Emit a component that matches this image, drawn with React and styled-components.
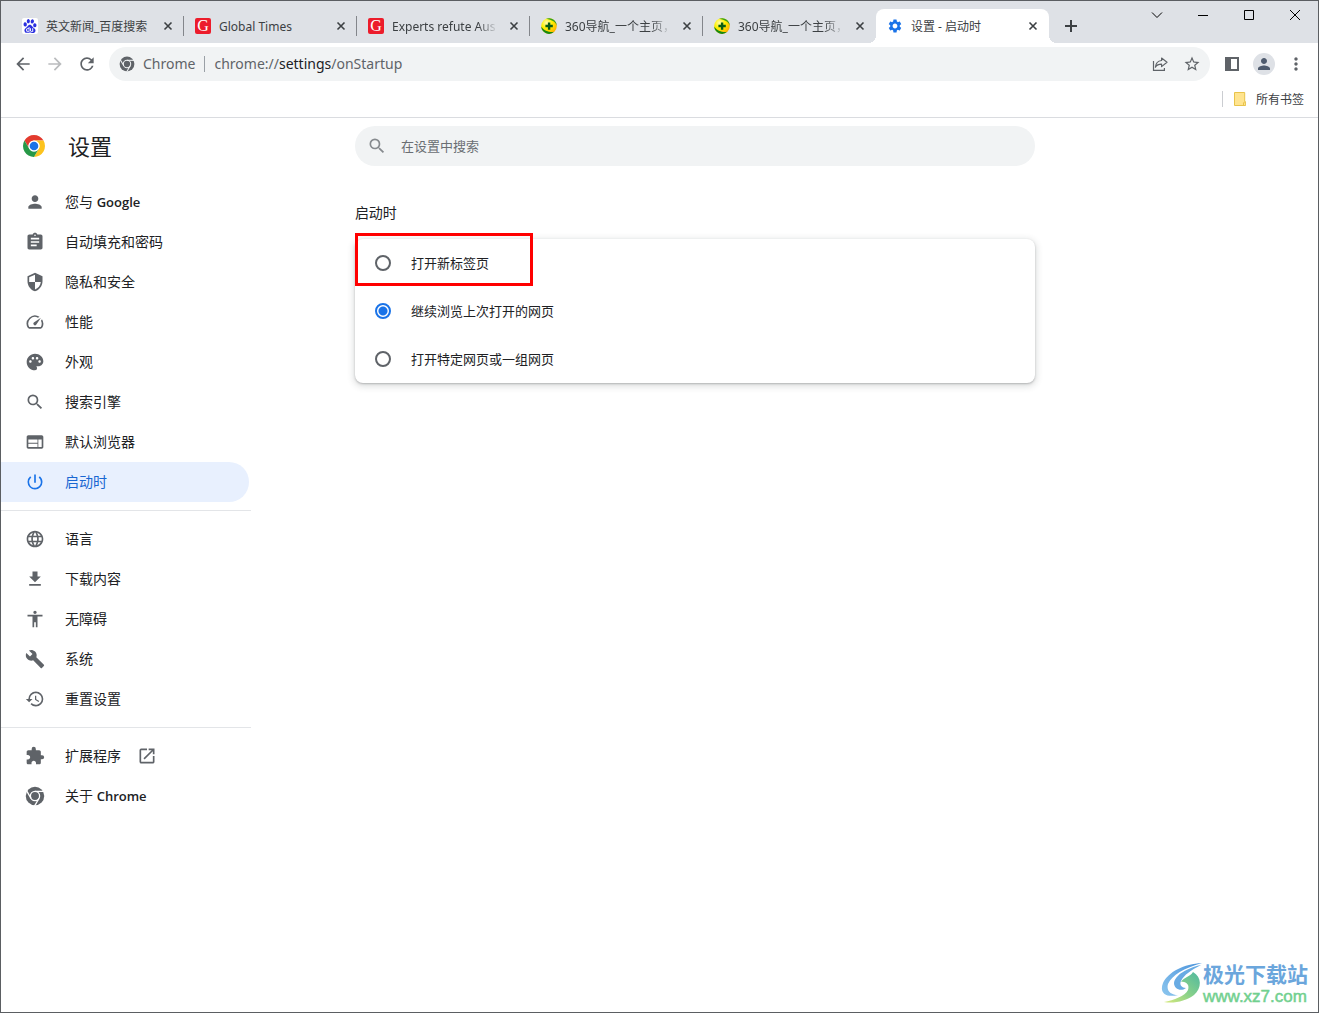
import React, {useState} from 'react'
import styled, {createGlobalStyle} from 'styled-components'
import {
  MdAccessibility,
  MdArrowBack,
  MdArrowForward,
  MdAssignment,
  MdBuild,
  MdExtension,
  MdFileDownload,
  MdHistory,
  MdLanguage,
  MdMoreVert,
  MdOpenInNew,
  MdOutlineSpeed,
  MdPalette,
  MdPerson,
  MdPowerSettingsNew,
  MdRefresh,
  MdSearch,
  MdSecurity,
  MdSettings,
  MdStarBorder,
  MdWeb,
} from 'react-icons/md'
import {SiBaidu} from 'react-icons/si'

const SECTOR = 'M12 6H22.39A12 12 0 0 0 1.61 6L6.8 15A6 6 0 0 1 12 6Z'

const ChromeLogo = ({size = 22}) => (
  <svg width={size} height={size} viewBox="0 0 24 24" aria-hidden="true">
    <path d={SECTOR} fill="#e33b2e" />
    <path d={SECTOR} fill="#fcc31e" transform="rotate(120 12 12)" />
    <path d={SECTOR} fill="#279847" transform="rotate(240 12 12)" />
    <circle cx="12" cy="12" r="6" fill="#fff" />
    <circle cx="12" cy="12" r="4.7" fill="#1a73e8" />
  </svg>
)

const ChromeMono = ({size = 20, gap = '#fff'}) => (
  <svg width={size} height={size} viewBox="-1 -1 26 26" aria-hidden="true">
    <circle cx="12" cy="12" r="12" fill="#5f6368" />
    <g stroke={gap} strokeWidth="1.7" fill="none">
      <circle cx="12" cy="12" r="6" />
      <path d="M12 6H24" />
      <path d="M12 6H24" transform="rotate(120 12 12)" />
      <path d="M12 6H24" transform="rotate(240 12 12)" />
    </g>
  </svg>
)

const Nav360Logo = () => (
  <svg width="16" height="16" viewBox="0 0 16 16" aria-hidden="true">
    <defs>
      <radialGradient id="ball" cx="0.35" cy="0.3" r="0.75">
        <stop offset="0" stopColor="#fffbb0" />
        <stop offset="0.45" stopColor="#fff200" />
        <stop offset="1" stopColor="#ffae00" />
      </radialGradient>
    </defs>
    <circle cx="8" cy="8" r="7.8" fill="url(#ball)" />
    <path d="M5 .8A7.8 7.8 0 0 1 15.8 8C15.3 4.5 11 1.6 5 .8Z" fill="#35a01c" />
    <path d="M.2 8.5A7.8 7.8 0 0 0 13.2 13.8C9 14.6 3 13 .2 8.5Z" fill="#178a10" />
    <path d="M6.9 4.4h2.4v2.4h2.5v2.4H9.3v2.5H6.9V9.2H4.4V6.8h2.5z" fill="#0b5d13" />
  </svg>
)

const CloseGlyph = () => (
  <svg width="16" height="16" viewBox="0 0 16 16" fill="none" stroke="#3c4043" strokeWidth="1.6" aria-hidden="true">
    <path d="M4.5 4.5l7 7M11.5 4.5l-7 7" />
  </svg>
)

const PlusGlyph = () => (
  <svg width="16" height="16" viewBox="0 0 16 16" fill="none" stroke="#3c4043" strokeWidth="2" aria-hidden="true">
    <path d="M8 2v12M2 8h12" />
  </svg>
)

const ShareGlyph = () => (
  <svg width="16" height="16" viewBox="0 0 16 16" fill="none" stroke="#5f6368" strokeWidth="1.2" aria-hidden="true">
    <path d="M1.5 5V14.4H12.4V12" />
    <path d="M9.6 2L15 6.3L9.6 10.6V8.2C6.6 8.2 4.7 9 3.4 11.2C3.7 7.4 5.8 4.9 9.6 4.5Z" strokeLinejoin="round" />
  </svg>
)

const SidePanelGlyph = () => (
  <svg width="14" height="14" viewBox="0 0 14 14" aria-hidden="true">
    <path d="M0 0h14v14H0zM6 2v10h6V2z" fill="#5f6368" fillRule="evenodd" />
  </svg>
)

const FolderGlyph = () => (
  <svg width="12" height="14" viewBox="0 0 12 14" aria-hidden="true">
    <path d="M.5.5h10.2v9.2h.9v3.8H.5z" fill="#ffe48f" stroke="#e8c34a" />
    <path d="M9.5 13.5v-2.8h1.2" fill="none" stroke="#e8c34a" />
  </svg>
)

const Swirl = () => (
  <svg width="42" height="42" viewBox="-1 -1 42 42" aria-hidden="true">
    <defs>
      <linearGradient id="swirlBlue" x1="1" y1="0" x2="0" y2="1">
        <stop offset="0" stopColor="#4c94dc" />
        <stop offset="1" stopColor="#8cc6ee" />
      </linearGradient>
      <linearGradient id="swirlGreen" x1="1" y1="0" x2="0" y2="1">
        <stop offset="0" stopColor="#4fb8a0" />
        <stop offset="0.5" stopColor="#86d08a" />
        <stop offset="1" stopColor="#d8ea7c" />
      </linearGradient>
    </defs>
    <path d="M40 0C22 1 6 9 1 20C-3 30 4 35 16 32C9 32 4 28 6 21C10 12 22 5 40 0Z" fill="url(#swirlBlue)" />
    <path d="M39 2C25 5 13 12 12 20C12 26 19 29 24 25C20 25 17 22 19 18C22 12 29 7 39 2Z" fill="#68abe3" />
    <path d="M31 9C40 14 40 25 32 32C24 38 12 41 2 39C12 37 23 33 26 27C28 22 24 18 19 19C22 14 28 14 31 9Z" fill="url(#swirlGreen)" />
  </svg>
)

const TABS = [
  {id: 1, title: '英文新闻_百度搜索', icon: 'baidu'},
  {id: 2, title: 'Global Times', icon: 'gt'},
  {id: 3, title: 'Experts refute Aus', icon: 'gt', fade: true},
  {id: 4, title: '360导航_一个主页，', icon: 'nav', fade: true},
  {id: 5, title: '360导航_一个主页，', icon: 'nav', fade: true},
  {id: 6, title: '设置 - 启动时', icon: 'settings', active: true},
]

const MENU = [
  [
    {label: '您与 ', brand: 'Google', Icon: MdPerson},
    {label: '自动填充和密码', Icon: MdAssignment},
    {label: '隐私和安全', Icon: MdSecurity},
    {label: '性能', Icon: MdOutlineSpeed},
    {label: '外观', Icon: MdPalette},
    {label: '搜索引擎', Icon: MdSearch},
    {label: '默认浏览器', Icon: MdWeb},
    {label: '启动时', Icon: MdPowerSettingsNew, selected: true},
  ],
  [
    {label: '语言', Icon: MdLanguage},
    {label: '下载内容', Icon: MdFileDownload},
    {label: '无障碍', Icon: MdAccessibility},
    {label: '系统', Icon: MdBuild},
    {label: '重置设置', Icon: MdHistory},
  ],
  [
    {label: '扩展程序', Icon: MdExtension, external: true},
    {label: '关于 ', brand: 'Chrome', Icon: ChromeMono},
  ],
]

const OPTIONS = ['打开新标签页', '继续浏览上次打开的网页', '打开特定网页或一组网页']

const getFavicon = (icon) => {
  switch (icon) {
    case 'baidu':
      return <PawIcon><SiBaidu size={14} /></PawIcon>
    case 'gt':
      return <LetterIcon>G</LetterIcon>
    case 'nav':
      return <Nav360Logo />
    default:
      return <MdSettings size={16} color="#1a73e8" />
  }
}

const App = () => {
  const [choice, setChoice] = useState(1)

  return (
    <>
      <GlobalStyle />
      <Window>
        <TabStrip>
          {TABS.map((tab) => (
            <Tab key={tab.id} $active={tab.active}>
              <TabButton>
                {getFavicon(tab.icon)}
                <TabTitle $fade={tab.fade}>{tab.title}</TabTitle>
              </TabButton>
              <CloseButton aria-label="关闭"><CloseGlyph /></CloseButton>
            </Tab>
          ))}
          <NewTab aria-label="新标签页"><PlusGlyph /></NewTab>
          <Controls>
            <ControlButton aria-label="搜索标签页">
              <svg width="12" height="12" viewBox="0 0 12 12"><path d="M1 3.500l5 5 5-5" /></svg>
            </ControlButton>
            <ControlButton aria-label="最小化">
              <svg width="12" height="12" viewBox="0 0 12 12"><path d="M1 6.500h10" /></svg>
            </ControlButton>
            <ControlButton aria-label="最大化">
              <svg width="12" height="12" viewBox="0 0 12 12"><path d="M1.500 1.500h9v9h-9z" /></svg>
            </ControlButton>
            <ControlButton aria-label="关闭窗口">
              <svg width="12" height="12" viewBox="0 0 12 12"><path d="M1 1l10 10M11 1L1 11" /></svg>
            </ControlButton>
          </Controls>
        </TabStrip>

        <Toolbar>
          <ToolButton aria-label="后退"><MdArrowBack size={20} /></ToolButton>
          <ToolButton aria-label="前进" disabled><MdArrowForward size={20} /></ToolButton>
          <ToolButton aria-label="重新加载"><MdRefresh size={20} /></ToolButton>
          <Omnibox>
            <ChromeMono size={16} gap="#f1f3f4" />
            <Origin>Chrome</Origin>
            <Address>chrome://<b>settings</b>/onStartup</Address>
            <ToolButton aria-label="分享"><ShareGlyph /></ToolButton>
            <ToolButton aria-label="加入书签"><MdStarBorder size={18} /></ToolButton>
          </Omnibox>
          <ToolButton aria-label="侧边栏"><SidePanelGlyph /></ToolButton>
          <ToolButton aria-label="用户"><Avatar><MdPerson size={18} /></Avatar></ToolButton>
          <ToolButton aria-label="更多"><MdMoreVert size={20} /></ToolButton>
        </Toolbar>

        <BookmarkBar>
          <BookmarkButton><FolderGlyph />所有书签</BookmarkButton>
        </BookmarkBar>

        <Page>
          <Sidebar>
            <Brand>
              <ChromeLogo />
              <h1>设置</h1>
            </Brand>
            <nav>
              {MENU.map((group, i) => (
                <MenuGroup key={i}>
                  {group.map(({label, brand, Icon, selected, external}) => (
                    <MenuItem key={label} href="#" $selected={selected}>
                      <Icon size={20} />
                      <Label>{label}{brand && <b>{brand}</b>}</Label>
                      {external && <MdOpenInNew size={20} />}
                    </MenuItem>
                  ))}
                </MenuGroup>
              ))}
            </nav>
          </Sidebar>
          <Main>
            <SearchBox>
              <MdSearch size={20} />
              <input type="search" aria-label="在设置中搜索" placeholder="在设置中搜索" />
            </SearchBox>
            <SectionTitle>启动时</SectionTitle>
            <Card>
              {OPTIONS.map((option, i) => (
                <Option key={option}>
                  <input
                    type="radio"
                    name="startup"
                    checked={choice === i}
                    onChange={() => setChoice(i)}
                  />
                  <Label>{option}</Label>
                </Option>
              ))}
              <Highlight />
            </Card>
          </Main>
        </Page>

        <SiteMark>
          <Swirl />
          <div>
            <SiteName>极光下载站</SiteName>
            <SiteUrl>www.xz7.com</SiteUrl>
          </div>
        </SiteMark>
      </Window>
    </>
  )
}

const GlobalStyle = createGlobalStyle`
  * {
    box-sizing: border-box;
  }
  body {
    margin: 0;
    background: #fff;
    color: #202124;
    font-family: "Noto Sans", "Noto Sans CJK SC", sans-serif;
    font-size: 14px;
  }
  button, input {
    font: inherit;
    color: inherit;
    border: 0;
    padding: 0;
    margin: 0;
    background: none;
  }
  svg {
    flex-shrink: 0;
  }
`

const Window = styled.div`
  position: relative;
  min-height: 100vh;
  border: 1px solid #5b5e62;
`

const TabStrip = styled.div`
  display: flex;
  align-items: flex-end;
  height: 42px;
  padding-left: 10px;
  background: #dee1e6;
`

const Tab = styled.div`
  position: relative;
  display: flex;
  align-items: center;
  flex: 0 1 173px;
  min-width: 0;
  height: 34px;
  padding: 0 8px 0 11px;
  border-radius: 8px 8px 0 0;
  background: ${({$active}) => ($active ? '#fff' : 'none')};

  /* divider between two resting tabs */
  &:not(:nth-child(5)):not(:nth-child(6))::after {
    content: '';
    position: absolute;
    right: 0;
    top: 7px;
    width: 1px;
    height: 20px;
    background: #83868b;
  }

  ${({$active}) => $active && `
    &::before, &&&&::after {
      content: '';
      position: absolute;
      bottom: 0;
      width: 8px;
      height: 8px;
    }
    &::before {
      left: -8px;
      background: radial-gradient(circle at 0 0, transparent 8px, #fff 8px);
    }
    &&&&::after {
      right: -8px;
      background: radial-gradient(circle at 100% 0, transparent 8px, #fff 8px);
    }
  `}
`

const TabButton = styled.button`
  display: flex;
  align-items: center;
  gap: 8px;
  flex: 1;
  min-width: 0;
  height: 100%;
`

const TabTitle = styled.span`
  flex: 1;
  overflow: hidden;
  margin-right: 4px;
  padding-top: 2px;
  color: #3c4043;
  font-size: 12px;
  line-height: 18px;
  text-align: left;
  white-space: nowrap;
  mask-image: ${({$fade}) => ($fade ? 'linear-gradient(to left, transparent 4px, #000 24px)' : 'none')};
`

const CloseButton = styled.button`
  display: flex;
  width: 16px;
  height: 16px;
`

const PawIcon = styled.span`
  display: grid;
  place-items: center;
  width: 16px;
  height: 16px;
  border-radius: 2px;
  background: #fff;
  color: #2a2fe0;
`

const LetterIcon = styled.span`
  width: 16px;
  height: 16px;
  border-radius: 2px;
  background: #ec1c2b;
  color: #fff;
  font: 16px/16px "Liberation Serif", serif;
  text-align: center;
`

const NewTab = styled.button`
  display: grid;
  place-items: center;
  width: 28px;
  height: 34px;
  margin-left: 8px;
`

const Controls = styled.div`
  display: flex;
  align-self: flex-start;
  margin-left: auto;
`

const ControlButton = styled.button`
  display: grid;
  place-items: center;
  width: 46px;
  height: 28px;

  svg {
    fill: none;
    stroke: #000;
  }
`

const Toolbar = styled.div`
  display: flex;
  align-items: center;
  height: 42px;
  padding: 0 6px;
  color: #5f6368;
`

const ToolButton = styled.button`
  display: grid;
  place-items: center;
  flex-shrink: 0;
  width: 32px;
  height: 32px;

  &:disabled {
    color: #babcbe;
  }
`

const Omnibox = styled.div`
  display: flex;
  align-items: center;
  flex: 1;
  min-width: 0;
  height: 34px;
  margin: 0 6px;
  padding: 0 2px 0 10px;
  border-radius: 17px;
  background: #f1f3f4;
  font-size: 14px;
  line-height: 20px;
`

const Origin = styled.span`
  margin: 0 9px 0 8px;
`

const Address = styled.span`
  flex: 1;
  display: flex;
  align-items: center;
  overflow: hidden;
  white-space: nowrap;

  b {
    color: #202124;
    font-weight: 400;
  }
  &::before {
    content: '';
    width: 1px;
    height: 16px;
    margin-right: 9px;
    background: #9aa0a6;
  }
`

const Avatar = styled.span`
  display: grid;
  place-items: center;
  width: 22px;
  height: 22px;
  border-radius: 50%;
  background: #dee1e6;
  color: #4f5b6e;
`

const BookmarkBar = styled.div`
  display: flex;
  align-items: center;
  justify-content: flex-end;
  height: 33px;
  padding: 0 14px 4px 0;
  border-bottom: 1px solid #dadce0;
`

const BookmarkButton = styled.button`
  display: flex;
  align-items: center;
  gap: 10px;
  height: 16px;
  padding-left: 11px;
  border-left: 1px solid #cbcdd1;
  color: #3c4043;
  font-size: 12px;
`

const Page = styled.div`
  display: grid;
  grid-template-columns: minmax(250px, 5fr) minmax(0, 680px) 4fr;
`

const Sidebar = styled.aside`
  width: 250px;
`

const Brand = styled.div`
  display: flex;
  align-items: center;
  gap: 23px;
  height: 56px;
  margin-bottom: 8px;
  padding-left: 22px;

  h1 {
    margin: 0;
    font-size: 22px;
    font-weight: 400;
    line-height: 32px;
  }
`

const MenuGroup = styled.div`
  & + & {
    margin-top: 8px;
    padding-top: 8px;
    border-top: 1px solid #e3e5e8;
  }
`

const Label = styled.span`
  line-height: 20px;

  b {
    font-size: 13px;
    font-weight: 600;
  }
`

const MenuItem = styled.a`
  display: flex;
  align-items: center;
  height: 40px;
  margin-right: 2px;
  padding-left: 24px;
  border-radius: 0 20px 20px 0;
  background: ${({$selected}) => ($selected ? '#e8f0fe' : 'none')};
  color: ${({$selected}) => ($selected ? '#1967d2' : '#202124')};
  font-family: "Open Sans", "Noto Sans CJK SC", sans-serif;
  font-size: 14px;
  text-decoration: none;

  svg {
    color: ${({$selected}) => ($selected ? '#1a73e8' : '#5f6368')};
  }
  svg + ${Label} {
    margin-left: 20px;
  }
  ${Label} + svg {
    margin-left: 16px;
  }
`

const Main = styled.main`
  padding-top: 8px;
`

const SearchBox = styled.label`
  display: flex;
  align-items: center;
  gap: 14px;
  height: 40px;
  padding: 0 12px;
  border-radius: 20px;
  background: #f1f3f4;
  color: #868a8e;

  input {
    flex: 1;
    font-size: 13px;
    outline: 0;
  }
  input::placeholder {
    color: #6a6e73;
    opacity: 1;
  }
`

const SectionTitle = styled.h2`
  margin: 36px 0 15px;
  font-size: 14px;
  font-weight: 400;
  line-height: 22px;
`

const Card = styled.div`
  position: relative;
  border-radius: 8px;
  background: #fff;
  box-shadow: 0 1px 2px rgba(60, 64, 67, 0.3), 0 2px 6px 2px rgba(60, 64, 67, 0.15);
`

const Option = styled.label`
  display: flex;
  align-items: center;
  gap: 20px;
  height: 48px;
  padding: 0 20px;
  font-size: 13px;

  input {
    appearance: none;
    width: 16px;
    height: 16px;
    border: 2px solid #5f6368;
    border-radius: 50%;
  }
  input:checked {
    border-color: #1a73e8;
    background: radial-gradient(circle, #1a73e8 4px, #fff 5px);
  }
`

/* red frame round the first option */
const Highlight = styled.div`
  position: absolute;
  top: -6px;
  left: 0;
  width: 178px;
  height: 53px;
  border: 3px solid #f00;
  pointer-events: none;
`

const SiteMark = styled.div`
  position: absolute;
  right: 10px;
  bottom: 6px;
  display: flex;
  align-items: center;
`

const SiteName = styled.div`
  color: #6ba6dc;
  font-size: 21px;
  font-weight: 700;
  line-height: 28px;
`

const SiteUrl = styled.div`
  color: #72d08f;
  font: 17px/18px "Liberation Sans", sans-serif;
  -webkit-text-stroke: 0.5px #72d08f;
`

export default App
